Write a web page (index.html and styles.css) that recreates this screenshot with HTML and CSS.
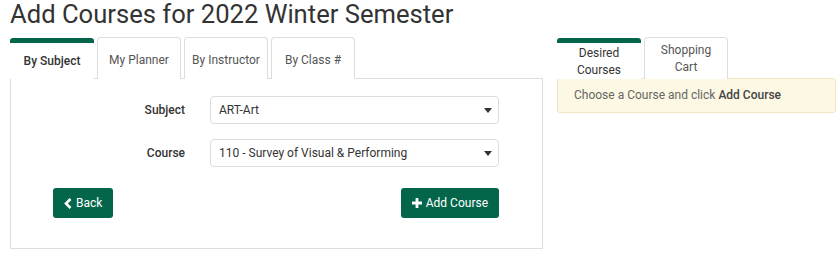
FILE: index.html
```html
<!DOCTYPE html>
<html lang="en">
<head>
    <meta charset="UTF-8">
    <title>Add Courses</title>
    <link rel="stylesheet" href="styles.css">
</head>
<body>
    <h1 class="title">Add Courses for 2022 Winter Semester</h1>

    <div class="layout">
        <div class="search-col">
            <ul class="tabs">
                <li class="tab active">By Subject</li>
                <li class="tab">My Planner</li>
                <li class="tab">By Instructor</li>
                <li class="tab">By Class #</li>
            </ul>
            <div class="panel">
                <div class="form-row">
                    <label class="form-label">Subject</label>
                    <div class="select-wrap">
                        <select class="form-select">
                            <option>ART-Art</option>
                        </select>
                        <span class="caret"></span>
                    </div>
                </div>
                <div class="form-row">
                    <label class="form-label">Course</label>
                    <div class="select-wrap">
                        <select class="form-select">
                            <option>110 - Survey of Visual &amp; Performing</option>
                        </select>
                        <span class="caret"></span>
                    </div>
                </div>
                <div class="actions">
                    <button class="btn">
                        <svg width="8" height="11" viewBox="0 0 8 11"><path d="M6.5 1 L2 5.5 L6.5 10" fill="none" stroke="#fff" stroke-width="2.6"/></svg>
                        Back
                    </button>
                    <button class="btn">
                        <svg width="10" height="10" viewBox="0 0 10 10"><path d="M3.6 0h2.8v3.6H10v2.8H6.4V10H3.6V6.4H0V3.6h3.6z" fill="#fff"/></svg>
                        Add Course
                    </button>
                </div>
            </div>
        </div>

        <div class="cart-col">
            <ul class="tabs">
                <li class="tab small active">Desired<br>Courses</li>
                <li class="tab small">Shopping<br>Cart</li>
            </ul>
            <div class="alert">Choose a Course and click <b>Add Course</b></div>
        </div>
    </div>
</body>
</html>
```

FILE: styles.css
```css
body {
    margin: 0;
    padding: 0 0 0 10px;
    font-family: Roboto, "Liberation Sans", sans-serif;
    font-size: 12px;
    color: #333;
    background: #fff;
}

.title {
    font-size: 25.6px;
    font-weight: 400;
    margin: 0;
    line-height: 29px;
    color: #333;
}

.layout {
    display: flex;
    gap: 14px;
    margin-top: 8px;
}

.search-col {
    width: 533px;
    flex-shrink: 0;
}

.cart-col {
    width: 279px;
    flex-shrink: 0;
}

.tabs {
    list-style: none;
    margin: 0;
    padding: 0;
    display: flex;
    gap: 2px;
    align-items: flex-end;
}

.tabs .tab + .tab {
    margin-left: 1px;
}

.tab {
    width: 84px;
    height: 42px;
    box-sizing: border-box;
    border: 1px solid #ddd;
    border-bottom: none;
    border-radius: 4px 4px 0 0;
    display: flex;
    align-items: center;
    justify-content: center;
    text-align: center;
    color: #555;
    background: #fff;
    padding-top: 3px;
}

.tab.active {
    border: none;
    border-top: 5px solid #03664b;
    border-radius: 3px 3px 0 0;
    color: #333;
    font-weight: 500;
    height: 41px;
    padding-top: 0;
    position: relative;
    z-index: 1;
}

.tab.small {
    line-height: 17px;
    padding-top: 1px;
}

.tab.small.active {
    font-weight: 400;
}

.panel {
    border: 1px solid #ddd;
    padding: 17px 43px 30px 42px;
    margin-top: -1px;
}

.form-row {
    display: flex;
    align-items: center;
    margin-bottom: 15px;
}

.form-label {
    width: 132px;
    text-align: right;
    font-weight: 500;
    margin-right: 25px;
}

.select-wrap {
    position: relative;
    width: 289px;
}

.form-select {
    width: 100%;
    height: 28px;
    appearance: none;
    -webkit-appearance: none;
    border: 1px solid #ddd;
    border-radius: 4px;
    background: #fff;
    padding: 0 8px;
    font-family: Roboto, "Liberation Sans", sans-serif;
    font-size: 12px;
    color: #333;
}

.caret {
    position: absolute;
    right: 7px;
    top: 12px;
    border-left: 4px solid transparent;
    border-right: 4px solid transparent;
    border-top: 5px solid #333;
}

.actions {
    display: flex;
    justify-content: space-between;
    margin-top: 21px;
}

.btn {
    height: 30px;
    padding: 0 11px;
    border: none;
    border-radius: 3px;
    background: #03664b;
    color: #fff;
    font-family: Roboto, "Liberation Sans", sans-serif;
    font-size: 12px;
    display: flex;
    align-items: center;
    gap: 4px;
}

.alert {
    border: 1px solid #efe6c4;
    border-radius: 3px;
    background: #fcf8e3;
    color: #666;
    padding: 9px 16px;
    line-height: 15px;
    margin-top: -1px;
}

.alert b {
    color: #444;
    font-weight: 500;
}
```
